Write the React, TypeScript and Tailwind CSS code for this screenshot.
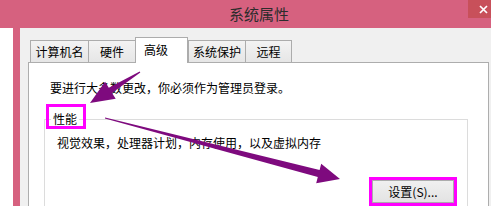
import React from "react";

function Tab({ w, children }: { w: string; children: React.ReactNode }) {
  return (
    <div
      className={`flex h-[22px] items-center justify-center border-l border-t border-[#acacac] bg-gradient-to-b from-[#f3f3f3] to-[#e6e6e6] ${w}`}
    >
      {children}
    </div>
  );
}

export default function App() {
  return (
    <div className="relative h-[206px] w-[491px] overflow-hidden bg-white font-['Noto_Sans_CJK_SC','Microsoft_YaHei',sans-serif] text-[12px] leading-[14px] text-black">
      {/* title bar */}
      <div className="relative flex h-[28px] items-center justify-center bg-[#d6617f] pl-[27px]">
        <span className="text-[15px] leading-[18px] text-[#2c2c2c]">系统属性</span>
        <div className="absolute right-0 top-0 flex h-[18px] w-[23px] items-center bg-[#c8505a] pl-[11px]">
          <svg width="9" height="9" viewBox="0 0 9 9">
            <path d="M1 1L8 8M8 1L1 8" stroke="white" strokeWidth="1.7" />
          </svg>
        </div>
      </div>

      {/* body */}
      <div className="flex h-[178px]">
        <div className="w-[13px] bg-white" />
        <div className="w-[7px] bg-[#d6617f]" />
        <div className="flex-1 bg-[#f0f0f0] pl-[8px] pt-[9px]">
          {/* tabs */}
          <div className="flex h-[25px] items-end pl-[2px]">
            <Tab w="w-[58px]">计算机名</Tab>
            <Tab w="w-[47px]">硬件</Tab>
            <div className="relative z-10 -mb-px flex h-[26px] w-[53px] items-center border border-b-0 border-[#acacac] bg-white pb-[1px] pl-[8px]">
              高级
            </div>
            <Tab w="w-[57px]">系统保护</Tab>
            <div className="flex h-[22px] w-[47px] items-center justify-center border-x border-t border-[#acacac] bg-gradient-to-b from-[#f3f3f3] to-[#e6e6e6]">
              远程
            </div>
          </div>

          {/* panel */}
          <div className="h-[170px] w-[461px] border border-[#adadad] bg-white px-[15px] pt-[18px]">
            <div className="pl-[6px]">要进行大多数更改，你必须作为管理员登录。</div>
            <fieldset className="mt-[17px] h-[120px] w-[424px] border border-[#dcdcdc]">
              <legend className="ml-[6px] px-[2px] leading-[14px]">性能</legend>
              <div className="pl-[12px] pt-[10px]">视觉效果，处理器计划，内存使用，以及虚拟内存</div>
              <div className="mt-[27px] flex justify-end pr-[10px]">
                <div className="border-[3px] border-[#f0f]">
                  <div className="flex h-[23px] w-[82px] items-center justify-center border border-[#acacac] bg-gradient-to-b from-[#f0f0f0] to-[#e3e3e3]">
                    设置(S)...
                  </div>
                </div>
              </div>
            </fieldset>
          </div>
        </div>
      </div>

      {/* annotations */}
      <div className="absolute left-[137px] top-[37px] h-[26px] w-[36px] border-[3px] border-[#f0f]" />
      <div className="absolute left-[46px] top-[104px] h-[25px] w-[40px] border-[3px] border-[#f0f]" />
      <svg className="pointer-events-none absolute left-0 top-0" width="491" height="206" viewBox="0 0 491 206">
        <polygon
          fill="#7e0a7e"
          points="139.7,71.6 108.8,87.8 105.1,81.85 90,103 115.7,98.85 112,92.9 140.3,72.4"
        />
        <polygon
          fill="#7e0a7e"
          points="105.1,117.5 319.6,170.1 321.2,163.8 340,179 316.2,183.2 317.8,176.9 104.9,118.5"
        />
      </svg>
    </div>
  );
}
